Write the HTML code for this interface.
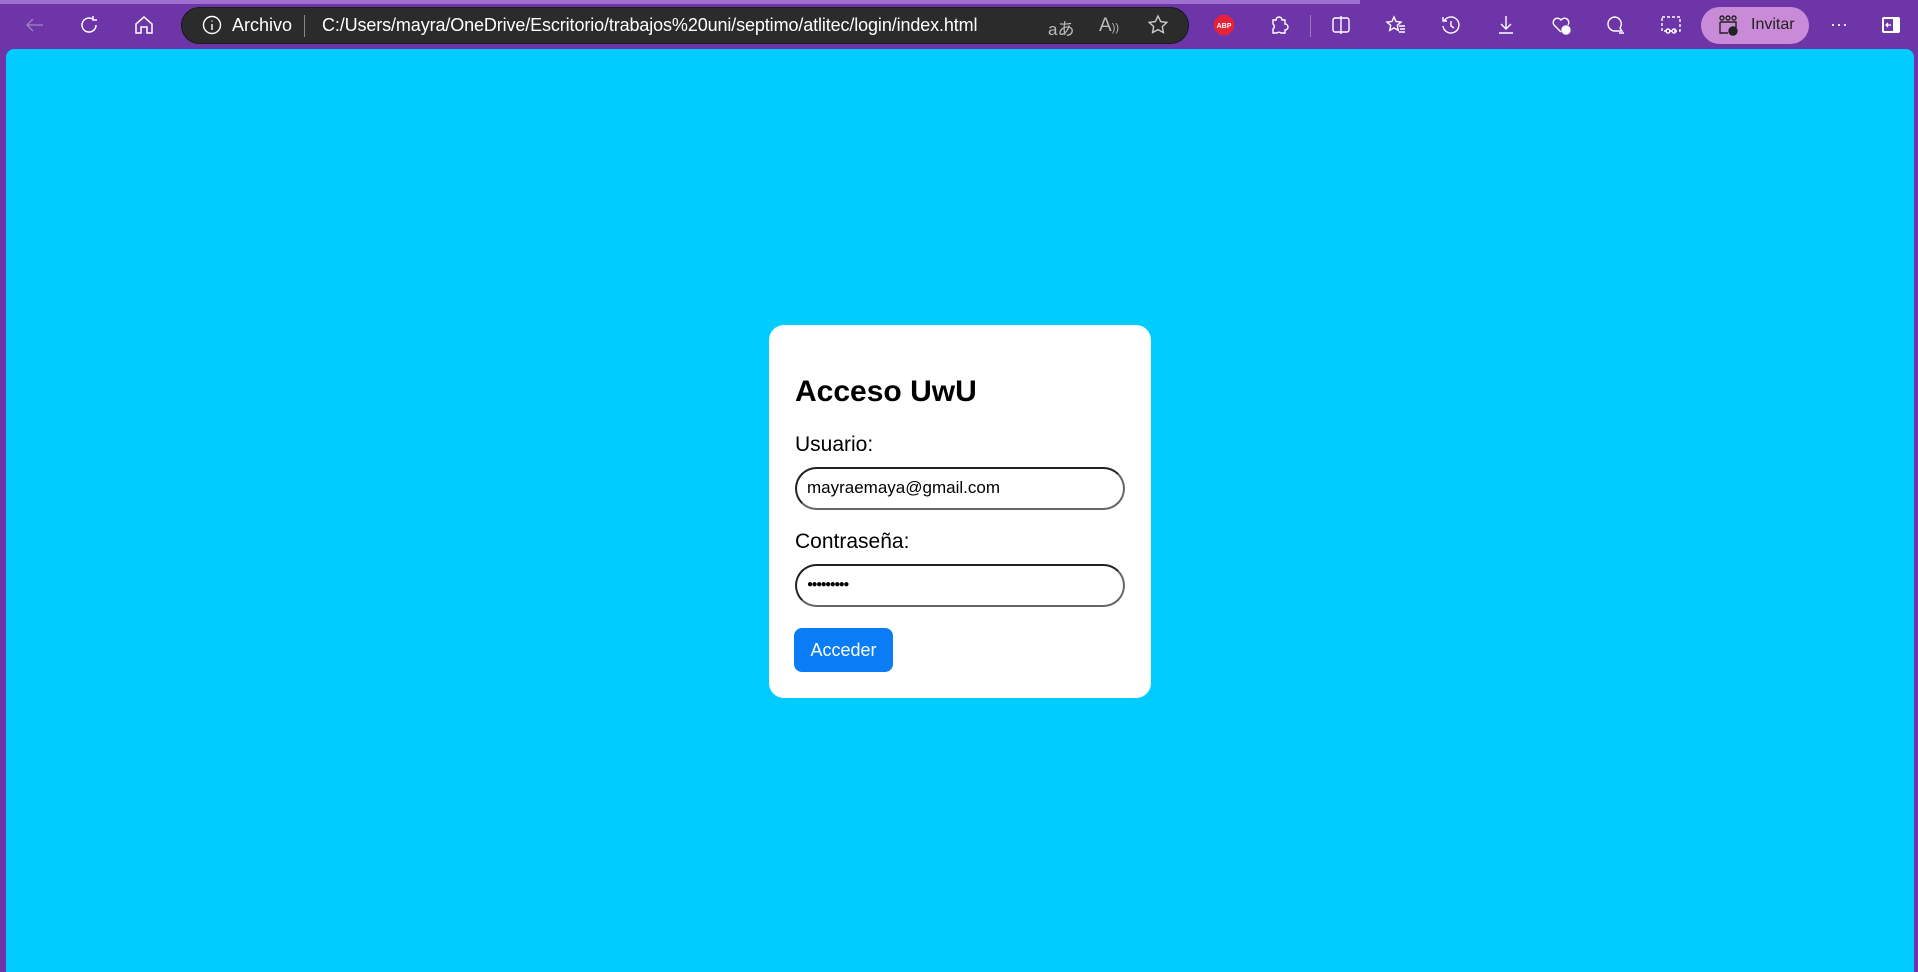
<!DOCTYPE html>
<html><head><meta charset="utf-8"><style>
*{margin:0;padding:0;box-sizing:border-box}
body{width:1918px;height:972px;background:#6d35a8;position:relative;overflow:hidden;font-family:"Liberation Sans",sans-serif}
.tabs{position:absolute;left:0;top:0;width:1918px;height:4px;background:#a070d0}
.tabs2{position:absolute;left:1360px;top:0;width:558px;height:4px;background:#6d35a8}
.view{position:absolute;left:6px;top:49px;width:1908px;height:923px;background:#00ccff;border-radius:8px 8px 0 0}
.ic{position:absolute;top:13px;width:24px;height:24px}
.addr{position:absolute;left:181px;top:7px;width:1008px;height:37px;background:#2b2b2b;border-radius:19px;border:1px solid #1a1a1a}
.t{position:absolute;color:#fff;font-size:18px;top:15px;white-space:nowrap}
.pill{position:absolute;left:1701px;top:7px;width:108px;height:37px;border-radius:19px;background:#c98bd8}
.card{position:absolute;left:769px;top:325px;width:382px;height:373px;background:#fff;border-radius:15px}
h1{position:absolute;left:26px;top:50px;font-size:30px;font-weight:bold;color:#000}
.lbl{position:absolute;left:26px;font-size:21px;color:#000}
.inp{position:absolute;left:26px;width:330px;height:43px;border:2px solid #222;border-bottom-color:#666;border-right-color:#666;border-radius:22px;font-size:17px;padding:9px 0 0 10px;color:#000}
.btn{position:absolute;left:25px;top:303px;width:99px;height:44px;background:#0a7cf6;border-radius:8px;color:#fff;font-size:18px;text-align:center;line-height:44px}
</style></head><body>
<div class="tabs"></div><div class="tabs2"></div>
<svg class="ic" style="left:23px" viewBox="0 0 24 24" fill="none" stroke="#9a7ac0" stroke-width="1.5"><path d="M20 12H4M10 6l-6 6 6 6"/></svg>
<svg class="ic" style="left:77px" viewBox="0 0 24 24" fill="none" stroke="#fff" stroke-width="1.5"><path d="M19 12a7 7 0 1 1-3-5.7M16 3v4h4"/></svg>
<svg class="ic" style="left:132px" viewBox="0 0 24 24" fill="none" stroke="#fff" stroke-width="1.5"><path d="M4 11l8-7 8 7v9h-5v-6h-6v6H4z"/></svg>
<div class="addr"></div>
<svg class="ic" style="left:200px" viewBox="0 0 24 24" fill="none" stroke="#fff" stroke-width="1.4"><circle cx="12" cy="12" r="8.5"/><path d="M12 11v6M12 7.5v1"/></svg>
<div class="t" style="left:232px">Archivo</div>
<div style="position:absolute;left:304px;top:15px;width:1px;height:22px;background:#888"></div>
<div class="t" style="left:322px;letter-spacing:-0.12px">C:/Users/mayra/OneDrive/Escritorio/trabajos%20uni/septimo/atlitec/login/index.html</div>
<div class="t" style="left:1048px;color:#bbb;font-size:17px">aあ</div>
<div class="t" style="left:1099px;color:#bbb;font-size:19px">A<span style="font-size:11px">))</span></div>
<svg class="ic" style="left:1146px" viewBox="0 0 24 24" fill="none" stroke="#ccc" stroke-width="1.4"><path d="M12 3l2.7 5.6 6.1.8-4.5 4.2 1.1 6-5.4-3-5.4 3 1.1-6-4.5-4.2 6.1-.8z"/></svg>
<svg class="ic" style="left:1212px" viewBox="0 0 24 24"><polygon points="8,2 16,2 22,8 22,16 16,22 8,22 2,16 2,8" fill="#e8213a"/><text x="12" y="15" font-size="7" font-weight="bold" fill="#fff" text-anchor="middle" font-family="Liberation Sans">ABP</text></svg>
<svg class="ic" style="left:1267px" viewBox="0 0 24 24" fill="none" stroke="#fff" stroke-width="1.4"><path d="M6 7h3a3 3 0 0 1 6 0h3v4a3 3 0 0 1 0 6v3h-4a3 3 0 0 0-4 0H6v-4a3 3 0 0 0 0-5z"/></svg>
<div style="position:absolute;left:1310px;top:15px;width:1px;height:22px;background:#9a7ac0"></div>
<svg class="ic" style="left:1329px" viewBox="0 0 24 24" fill="none" stroke="#fff" stroke-width="1.4"><rect x="4" y="5" width="16" height="14" rx="2"/><path d="M12 3v18"/></svg>
<svg class="ic" style="left:1384px" viewBox="0 0 24 24" fill="none" stroke="#fff" stroke-width="1.4"><path d="M10 4l2 4.5 5 .6-3.7 3.3 1 5-4.3-2.5-4.3 2.5 1-5L3 9.1l5-.6zM15 13h6M16 16h5M15 19h6"/></svg>
<svg class="ic" style="left:1439px" viewBox="0 0 24 24" fill="none" stroke="#fff" stroke-width="1.4"><path d="M5 8a8 8 0 1 1-1 5M4 4v4h4M12 8v5l3 2"/></svg>
<svg class="ic" style="left:1494px" viewBox="0 0 24 24" fill="none" stroke="#fff" stroke-width="1.4"><path d="M12 3v13M7 11l5 5 5-5M5 20h14"/></svg>
<svg class="ic" style="left:1549px" viewBox="0 0 24 24" fill="none" stroke="#fff" stroke-width="1.4"><path d="M12 19l-7-7a4 4 0 0 1 7-5 4 4 0 0 1 7 5"/><circle cx="17" cy="17" r="4" fill="#fff"/></svg>
<svg class="ic" style="left:1604px" viewBox="0 0 24 24" fill="none" stroke="#fff" stroke-width="1.4"><path d="M11 4a7 7 0 1 0 0 14h7l-2-3a7 7 0 0 0-5-11zM15 20h5"/></svg>
<svg class="ic" style="left:1659px" viewBox="0 0 24 24" fill="none" stroke="#fff" stroke-width="1.4" stroke-dasharray="3 2"><rect x="3" y="4" width="18" height="14"/><circle cx="9" cy="18" r="2" stroke-dasharray="none"/><circle cx="15" cy="18" r="2" stroke-dasharray="none"/></svg>
<div class="pill"></div>
<svg class="ic" style="left:1716px" viewBox="0 0 24 24" fill="none" stroke="#222" stroke-width="1.4"><circle cx="6" cy="5" r="2"/><circle cx="12" cy="5" r="2"/><circle cx="18" cy="5" r="2"/><path d="M4 9h16v6M4 9v11h8"/><circle cx="17" cy="18" r="4" fill="#222"/></svg>
<div class="t" style="left:1751px;color:#222;font-size:16px;top:16px">Invitar</div>
<div class="t" style="left:1830px;top:14px">···</div>
<svg class="ic" style="left:1879px" viewBox="0 0 24 24"><rect x="3" y="4" width="18" height="16" rx="2" fill="#fff"/><rect x="5" y="6" width="9" height="12" fill="#6d35a8"/><path d="M12 12H7M9 10l-2 2 2 2" stroke="#fff" stroke-width="1.3" fill="none"/></svg>
<div class="view"></div>
<div class="card">
<h1>Acceso UwU</h1>
<div class="lbl" style="top:108px">Usuario:</div>
<div class="inp" style="top:142px">mayraemaya@gmail.com</div>
<div class="lbl" style="top:205px">Contraseña:</div>
<div class="inp" style="top:239px;font-size:10px;padding-top:13px;letter-spacing:-1.5px">●●●●●●●●●</div>
<div class="btn">Acceder</div>
</div>
</body></html>
